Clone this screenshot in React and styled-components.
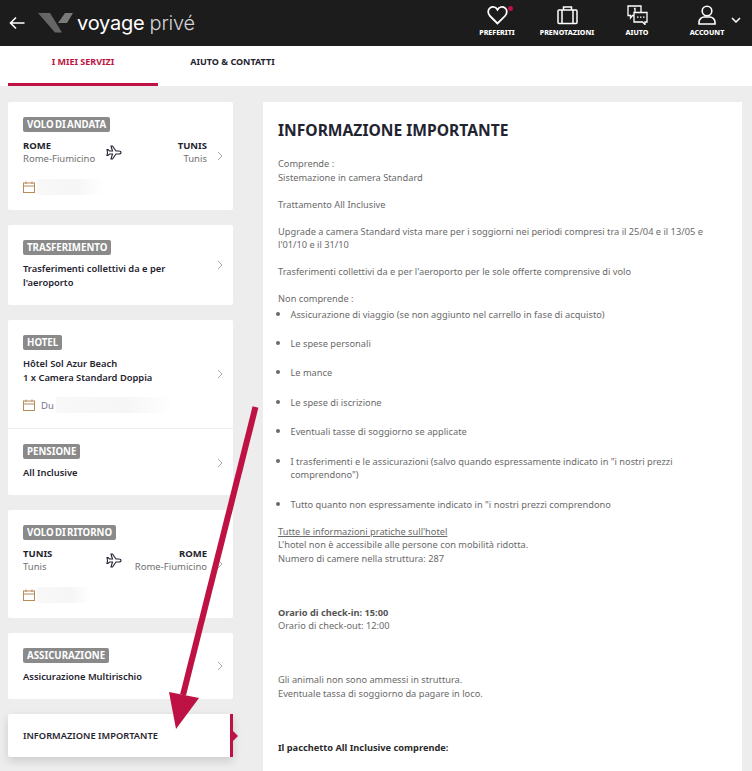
import React from 'react'
import styled, { createGlobalStyle } from 'styled-components'

const FONT = `"Noto Sans", "Open Sans", sans-serif`;

const GlobalStyle = createGlobalStyle`
  html, body {
    margin: 0;
    padding: 0;
    background: #ededed;
  }
  body {
    font-family: ${FONT};
    color: #1f2430;
  }
  * {
    box-sizing: border-box;
  }
`;

const Page = styled.div`
  position: relative;
  width: 752px;
  height: 771px;
  overflow: hidden;
  background: #ededed;
`;

const Header = styled.header`
  height: 46px;
  background: #1c1c1c;
  display: flex;
  align-items: center;
  padding: 0 10px 0 9px;
`;

const Brand = styled.div`
  display: flex;
  align-items: center;
  gap: 4px;
  margin-left: 13px;
  color: #fff;
  font-family: Inter, sans-serif;
  font-size: 20px;
  font-weight: 400;
  letter-spacing: -0.2px;
  line-height: 22px;
`;

const BrandLight = styled.span`
  color: #d4d4d4;
  font-weight: 300;
  margin-left: 1px;
`;

const HeaderNav = styled.nav`
  margin-left: auto;
  display: flex;
  height: 46px;
`;

const NavItem = styled.div`
  width: 70px;
  display: flex;
  flex-direction: column;
  align-items: center;
  padding-top: 5px;
  color: #fff;
  font-size: 7.1px;
  font-weight: 800;
  line-height: 10px;
  position: relative;
`;

const NavIcon = styled.div`
  height: 21px;
  margin-bottom: 1px;
  position: relative;
`;

const Dot = styled.span`
  position: absolute;
  top: 1px;
  right: -5px;
  width: 5px;
  height: 5px;
  border-radius: 50%;
  background: #bd1243;
`;

const Caret = styled.div`
  position: absolute;
  top: 17px;
  right: 1px;
  line-height: 0;
`;

const Tabs = styled.div`
  height: 40px;
  background: #fff;
  display: flex;
  padding-left: 8px;
`;

const Tab = styled.div`
  width: ${props => props.$width}px;
  height: 40px;
  display: flex;
  justify-content: center;
  padding-top: 9px;
  font-size: 9px;
  font-weight: 700;
  line-height: 13px;
  color: ${props => props.$active ? '#bd1243' : '#1f2430'};
  border-bottom: 3px solid ${props => props.$active ? '#bd1243' : 'transparent'};
`;

const Content = styled.div`
  display: flex;
  align-items: flex-start;
  padding: 16px 10px 0 8px;
  gap: 30px;
`;

const Sidebar = styled.aside`
  width: 225px;
  flex: none;
  display: flex;
  flex-direction: column;
  gap: 15px;
`;

const Card = styled.section`
  background: #fff;
  border-radius: 2px;
`;

const Block = styled.div`
  position: relative;
  height: ${props => props.$height}px;
  padding: 15px 26px 0 15px;
  & + & {
    border-top: 1px solid #ededed;
  }
`;

const Badge = styled.span`
  display: inline-block;
  height: 15px;
  padding: 0 4px;
  background: #8a8a8a;
  border-radius: 2px;
  color: #fff;
  font-size: 9.7px;
  font-weight: 700;
  word-spacing: -1.3px;
  line-height: 15px;
  vertical-align: top;
`;

const BadgeRow = styled.div`
  height: 15px;
  margin-bottom: ${props => props.$gap}px;
  display: flex;
`;

const Strong = styled.div`
  font-size: 9.35px;
  font-weight: 600;
  line-height: 14px;
  color: #1f2430;
`;

const Route = styled.div`
  display: grid;
  grid-template-columns: 1fr 1fr;
  position: relative;
  width: 184px;
`;

const Stop = styled.div`
  text-align: ${props => props.$right ? 'right' : 'left'};
`;

const City = styled.div`
  font-size: 9.5px;
  font-weight: 700;
  line-height: 13px;
`;

const Airport = styled.div`
  font-size: 9.5px;
  line-height: 13px;
  color: #6f6f6f;
`;

const PlaneSlot = styled.div`
  position: absolute;
  left: 83px;
  top: 6px;
  line-height: 0;
`;

const DateRow = styled.div`
  display: flex;
  align-items: center;
  gap: 6px;
  margin-top: ${props => props.$top}px;
  height: 16px;
  font-size: 9.5px;
  color: #7a6f8e;
`;

const Blur = styled.div`
  width: ${props => props.$width}px;
  height: 16px;
  margin-left: -4px;
  background: linear-gradient(90deg, #f8f8f8 0%, #f6f6f6 60%, #ffffff 100%);
`;

const Chevron = styled.div`
  position: absolute;
  right: 10px;
  top: ${props => props.$top}px;
  line-height: 0;
`;

const ActiveCard = styled.div`
  position: relative;
  height: 43px;
  background: #fff;
  border-radius: 2px 0 0 2px;
  border-right: 3px solid #bd1243;
  padding-left: 15px;
  display: flex;
  align-items: center;
  font-size: 9.3px;
  font-weight: 600;
  color: #1f2430;
  box-shadow: 0 4px 10px rgba(0, 0, 0, 0.14);
  &::after {
    content: '';
    position: absolute;
    left: 100%;
    top: 14px;
    border-left: 8px solid #bd1243;
    border-top: 8px solid transparent;
    border-bottom: 8px solid transparent;
  }
`;

const Panel = styled.main`
  width: 479px;
  height: 700px;
  background: #fff;
  padding: 17px 15px 0;
  font-size: 9.25px;
  line-height: 13.5px;
  color: #6a6a6a;
`;

const Title = styled.h1`
  margin: 0 0 16px;
  font-size: 15.6px;
  line-height: 22px;
  font-weight: 700;
  color: #1f2430;
`;

const Lines = styled.p`
  margin: 0 0 ${props => props.$gap ?? 13.5}px;
`;

const List = styled.ul`
  margin: 0 0 13.5px;
  padding: 0 0 0 12.5px;
  list-style: disc;
  list-style-position: outside;
  & li {
    margin-bottom: 14.95px;
  }
  & li:last-child {
    margin-bottom: 0;
  }
  & li::marker {
    font-size: 11px;
  }
`;

const Under = styled.span`
  text-decoration: underline;
`;

const Bold = styled.strong`
  font-weight: 700;
  color: ${props => props.$dark ? '#2b2b2b' : '#555'};
`;

const Arrow = styled.svg`
  position: absolute;
  left: 0;
  top: 0;
  pointer-events: none;
`;

const Back = () => (
  <svg width="16" height="14" viewBox="0 0 16 14" fill="none" stroke="#fff" strokeWidth="1.6">
    <path d="M15.5 7H1.5M7 1.5 1.5 7 7 12.5" />
  </svg>
);

const Logo = () => (
  <svg width="35" height="20" viewBox="0 0 35 20">
    <path d="M0 0h12l12 19.500h-7z" fill="#666" />
    <path d="M27 0h8l-6 10h-9z" fill="#7a7a7a" />
  </svg>
);

const Heart = () => (
  <svg width="21" height="20" viewBox="0 0 21 20" fill="none" stroke="#fff" strokeWidth="1.8">
    <path d="M10.500 18.500 3 11C.6 8.500.6 4.800 3 2.900c2.600-1.900 5.800-1.100 7.500 1.800C12.200 1.800 15.400 1 18 2.900c2.400 1.900 2.400 5.600 0 8.100z" />
  </svg>
);

const Case = () => (
  <svg width="21" height="20" viewBox="0 0 21 20" fill="none" stroke="#fff" strokeWidth="1.5">
    <rect x="1" y="5" width="19" height="13.500" rx="1" />
    <path d="M6.500 5V2h8v3M5 5v13.500M16 5v13.500" />
  </svg>
);

const Chat = () => (
  <svg width="21" height="20" viewBox="0 0 21 20" fill="none" stroke="#fff" strokeWidth="1.300">
    <path d="M1 1h13v9.500H5.500L3.500 13v-2.500H1z" />
    <path d="M7 7.500h13v9.500h-2v2.500L15.500 17H7z" fill="#1c1c1c" />
    <path d="M10 12.200h1.500M13 12.200h1.500M16 12.200h1.500M7 3.500h1v4" />
  </svg>
);

const User = () => (
  <svg width="18" height="20" viewBox="0 0 18 20" fill="none" stroke="#fff" strokeWidth="1.600">
    <circle cx="9" cy="6" r="4.800" />
    <path d="M1 19v-2c0-3 3-5 5-5h6c2 0 5 2 5 5v2z" />
  </svg>
);

const Plane = () => (
  <svg width="16" height="15" viewBox="0 0 16 15" fill="#fff" stroke="#1f2430" strokeWidth="1.100">
    <path d="M15 7.500c0-.9-1-1.500-2.200-1.500H10L6.500 1H5l1.500 5H3.500L2 4.500H1L1.500 7.500 1 10.500h1L3.500 9h3L5 14h1.500L10 9h2.800C14 9 15 8.400 15 7.500z" />
  </svg>
);

const Calendar = () => (
  <svg width="12" height="12" viewBox="0 0 12 12" fill="none" stroke="#b98a5a" strokeWidth="1">
    <rect x="0.500" y="2" width="11" height="9.500" />
    <path d="M0.500 5h11M3 0.500V3M9 0.500V3" />
  </svg>
);

const ChevronIcon = () => (
  <svg width="6" height="10" viewBox="0 0 6 10" fill="none" stroke="#a8a8a8" strokeWidth="1">
    <path d="M1 1l4 4-4 4" />
  </svg>
);

const CaretIcon = () => (
  <svg width="10" height="6" viewBox="0 0 10 6" fill="none" stroke="#fff" strokeWidth="1.500">
    <path d="M1 1l4 4 4-4" />
  </svg>
);

const NAV = [
  { label: 'PREFERITI', icon: <Heart />, dot: true },
  { label: 'PRENOTAZIONI', icon: <Case /> },
  { label: 'AIUTO', icon: <Chat /> },
  { label: 'ACCOUNT', icon: <User />, caret: true },
];

const EXCLUDED = [
  'Assicurazione di viaggio (se non aggiunto nel carrello in fase di acquisto)',
  'Le spese personali',
  'Le mance',
  'Le spese di iscrizione',
  'Eventuali tasse di soggiorno se applicate',
  'I trasferimenti e le assicurazioni (salvo quando espressamente indicato in "i nostri prezzi comprendono")',
  'Tutto quanto non espressamente indicato in "i nostri prezzi comprendono',
];

function FlightCard({ title, from, to, blurWidth }) {
  return (
    <Card>
      <Block $height={108}>
        <BadgeRow $gap={7}><Badge>{title}</Badge></BadgeRow>
        <Route>
          <Stop>
            <City>{from[0]}</City>
            <Airport>{from[1]}</Airport>
          </Stop>
          <Stop $right>
            <City>{to[0]}</City>
            <Airport>{to[1]}</Airport>
          </Stop>
          <PlaneSlot><Plane /></PlaneSlot>
        </Route>
        <DateRow $top={14}>
          <Calendar />
          <Blur $width={blurWidth} />
        </DateRow>
        <Chevron $top={49}><ChevronIcon /></Chevron>
      </Block>
    </Card>
  );
}

function App() {
  return (
    <Page>
      <GlobalStyle />
      <Header>
        <Back />
        <Brand>
          <Logo />
          <span>voyage</span>
          <BrandLight>privé</BrandLight>
        </Brand>
        <HeaderNav>
          {NAV.map(item => (
            <NavItem key={item.label}>
              <NavIcon>
                {item.icon}
                {item.dot && <Dot />}
              </NavIcon>
              {item.label}
              {item.caret && <Caret><CaretIcon /></Caret>}
            </NavItem>
          ))}
        </HeaderNav>
      </Header>
      <Tabs>
        <Tab $width={150} $active>I MIEI SERVIZI</Tab>
        <Tab $width={149}>AIUTO &amp; CONTATTI</Tab>
      </Tabs>
      <Content>
        <Sidebar>
          <FlightCard
            title="VOLO DI ANDATA"
            from={['ROME', 'Rome-Fiumicino']}
            to={['TUNIS', 'Tunis']}
            blurWidth={66}
          />
          <Card>
            <Block $height={80}>
              <BadgeRow $gap={7}><Badge>TRASFERIMENTO</Badge></BadgeRow>
              <Strong>Trasferimenti collettivi da e per l'aeroporto</Strong>
              <Chevron $top={35}><ChevronIcon /></Chevron>
            </Block>
          </Card>
          <Card>
            <Block $height={108}>
              <BadgeRow $gap={7}><Badge>HOTEL</Badge></BadgeRow>
              <Strong>Hôtel Sol Azur Beach<br />1 x Camera Standard Doppia</Strong>
              <DateRow $top={12}>
                <Calendar />
                Du
                <Blur $width={118} />
              </DateRow>
              <Chevron $top={49}><ChevronIcon /></Chevron>
            </Block>
            <Block $height={67}>
              <BadgeRow $gap={7}><Badge>PENSIONE</Badge></BadgeRow>
              <Strong>All Inclusive</Strong>
              <Chevron $top={29}><ChevronIcon /></Chevron>
            </Block>
          </Card>
          <FlightCard
            title="VOLO DI RITORNO"
            from={['TUNIS', 'Tunis']}
            to={['ROME', 'Rome-Fiumicino']}
            blurWidth={55}
          />
          <Card>
            <Block $height={66}>
              <BadgeRow $gap={7}><Badge>ASSICURAZIONE</Badge></BadgeRow>
              <Strong>Assicurazione Multirischio</Strong>
              <Chevron $top={28}><ChevronIcon /></Chevron>
            </Block>
          </Card>
          <ActiveCard>INFORMAZIONE IMPORTANTE</ActiveCard>
        </Sidebar>
        <Panel>
          <Title>INFORMAZIONE IMPORTANTE</Title>
          <Lines>Comprende :<br />Sistemazione in camera Standard</Lines>
          <Lines>Trattamento All Inclusive</Lines>
          <Lines>Upgrade a camera Standard vista mare per i soggiorni nei periodi compresi tra il 25/04 e il 13/05 e l'01/10 e il 31/10</Lines>
          <Lines>Trasferimenti collettivi da e per l'aeroporto per le sole offerte comprensive di volo</Lines>
          <Lines $gap={1}>Non comprende :</Lines>
          <List>
            {EXCLUDED.map(text => <li key={text}>{text}</li>)}
          </List>
          <Lines $gap={40.5}>
            <Under>Tutte le informazioni pratiche sull'hotel</Under><br />
            L'hotel non è accessibile alle persone con mobilità ridotta.<br />
            Numero di camere nella struttura: 287
          </Lines>
          <Lines $gap={40.5}>
            <Bold>Orario di check-in: 15:00</Bold><br />
            Orario di check-out: 12:00
          </Lines>
          <Lines $gap={40.5}>
            Gli animali non sono ammessi in struttura.<br />
            Eventuale tassa di soggiorno da pagare in loco.
          </Lines>
          <Lines><Bold $dark>Il pacchetto All Inclusive comprende:</Bold></Lines>
        </Panel>
      </Content>
      <Arrow width="752" height="771" viewBox="0 0 752 771">
        <path d="M255.500 407 183 695" stroke="#bd1243" strokeWidth="6" fill="none" />
        <path d="M169 692 199 698 176 729z" fill="#bd1243" />
      </Arrow>
    </Page>
  );
}

export default App;
